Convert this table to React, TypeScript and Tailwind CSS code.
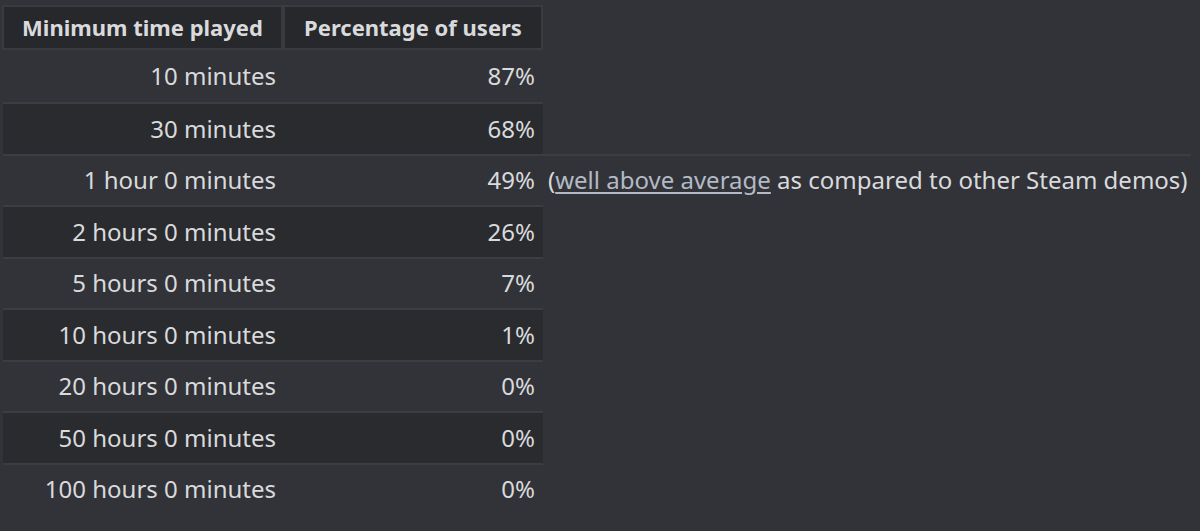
const rows: { time: string; pct: string; note?: boolean }[] = [
  { time: '10 minutes', pct: '87%' },
  { time: '30 minutes', pct: '68%' },
  { time: '1 hour 0 minutes', pct: '49%', note: true },
  { time: '2 hours 0 minutes', pct: '26%' },
  { time: '5 hours 0 minutes', pct: '7%' },
  { time: '10 hours 0 minutes', pct: '1%' },
  { time: '20 hours 0 minutes', pct: '0%' },
  { time: '50 hours 0 minutes', pct: '0%' },
  { time: '100 hours 0 minutes', pct: '0%' },
];

export default function App() {
  return (
    <div
      className="h-[531px] w-[1200px] overflow-hidden bg-[#323338] pt-[5px] pl-[2px] text-[#d9dadc]"
      style={{ fontFamily: '"Noto Sans", "Open Sans", sans-serif' }}
    >
      <div className="flex w-[541px] gap-[4px] bg-[#3a3b40] p-[2px] text-[22px] font-bold">
        <div className="flex h-[41px] w-[277px] items-center justify-center bg-[#27282b]">
          Minimum time played
        </div>
        <div className="flex h-[41px] w-[256px] items-center justify-center bg-[#27282b]">
          Percentage of users
        </div>
      </div>

      <div className="flex flex-col pl-[1px] text-[24px]">
        {rows.map((r, i) => (
          <div key={r.time} className={'flex ' + (i === 0 ? 'h-[52px]' : 'h-[51.5px]')}>
            <div
              className={
                'flex h-full w-[540px] shrink-0 items-center ' +
                (i % 2 === 1 ? 'bg-[#2a2b2f] ' : '') +
                (i === 0 ? '' : 'border-t-2 border-[#3c3d42]')
              }
            >
              <div className="w-[281px] pr-[8px] text-right">{r.time}</div>
              <div className="w-[259px] pr-[8px] text-right">{r.pct}</div>
            </div>
            {r.note && (
              <div className="flex h-full w-[648px] items-center border-t-2 border-[#3c3d42] pl-[5px]">
                <span>
                  (
                  <a href="#" className="text-[#b3bac5] underline underline-offset-[3px]">
                    well above average
                  </a>{' '}
                  as compared to other Steam demos)
                </span>
              </div>
            )}
          </div>
        ))}
      </div>
    </div>
  );
}
